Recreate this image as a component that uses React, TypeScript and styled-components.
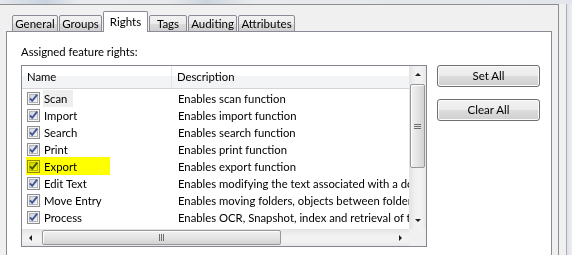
import React from "react";
import styled, { createGlobalStyle } from "styled-components";

const GlobalStyle = createGlobalStyle`
  html, body {
    margin: 0;
    padding: 0;
    background: #f0f0f0;
  }
  body {
    font-family: "Segoe UI", Lato, "Liberation Sans", sans-serif;
    font-size: 11.3px;
    color: #000;
  }
`;

const TABS = [
  { label: "General", width: 46 },
  { label: "Groups", width: 43 },
  { label: "Rights", width: 45, active: true },
  { label: "Tags", width: 38 },
  { label: "Auditing", width: 49 },
  { label: "Attributes", width: 57 },
];

const RIGHTS = [
  { name: "Scan", desc: "Enables scan function", focused: true },
  { name: "Import", desc: "Enables import function" },
  { name: "Search", desc: "Enables search function" },
  { name: "Print", desc: "Enables print function" },
  { name: "Export", desc: "Enables export function", marked: true },
  { name: "Edit Text", desc: "Enables modifying the text associated with a document" },
  { name: "Move Entry", desc: "Enables moving folders, objects between folders" },
  { name: "Process", desc: "Enables OCR, Snapshot, index and retrieval of text" },
];

const CheckBox = () => (
  <StyledCheck width="13" height="13" viewBox="0 0 13 13">
    <defs>
      <linearGradient id="cbfill" x1="0" y1="0" x2="1" y2="1">
        <stop offset="0" stopColor="#cfd1d6" />
        <stop offset="1" stopColor="#f7f7f7" />
      </linearGradient>
    </defs>
    <rect x="0.5" y="0.5" width="12" height="12" fill="#f4f4f4" stroke="#8f8f8f" />
    <rect x="2.5" y="2.5" width="8" height="8" fill="url(#cbfill)" stroke="#b3b6bd" />
    <path d="M3 6.3 L5.2 8.8 L10.2 2.6" fill="none" stroke="#40569a" strokeWidth="1.9" />
  </StyledCheck>
);

const Arrow = ({ dir }: { dir: "up" | "down" | "left" | "right" }) => {
  const d = {
    up: "M1 4 L4 1 L7 4 Z",
    down: "M1 1 L4 4 L7 1 Z",
    left: "M4 1 L1 4 L4 7 Z",
    right: "M1 1 L4 4 L1 7 Z",
  }[dir];
  const vertical = dir === "up" || dir === "down";
  return (
    <svg width={vertical ? 8 : 5} height={vertical ? 5 : 8} viewBox={vertical ? "0 0 8 5" : "0 0 5 8"}>
      <path d={d} fill="#1e1e1e" />
    </svg>
  );
};

export default function App() {
  return (
    <>
      <GlobalStyle />
      <StyledScreen>
        <StyledBackdrop />
        <StyledBody>
          <StyledDialog>
            <StyledTabRow>
              {TABS.map((t) => (
                <StyledTab key={t.label} $width={t.width} $active={!!t.active}>
                  {t.label}
                </StyledTab>
              ))}
            </StyledTabRow>
            <StyledPanel>
              <StyledCaption>Assigned feature rights:</StyledCaption>
              <StyledContent>
                <StyledListBox>
                  <StyledListMain>
                    <StyledListArea>
                      <StyledHeader>
                        <StyledHeaderCell $width={150}>Name</StyledHeaderCell>
                        <StyledHeaderCell>Description</StyledHeaderCell>
                      </StyledHeader>
                      {RIGHTS.map((r) => (
                        <StyledRow key={r.name}>
                          <StyledNameCell>
                            <CheckBox />
                            <StyledName $focused={!!r.focused}>{r.name}</StyledName>
                            {r.marked && <StyledMarker />}
                          </StyledNameCell>
                          <StyledDescCell>{r.desc}</StyledDescCell>
                        </StyledRow>
                      ))}
                    </StyledListArea>
                    <StyledVScroll>
                      <StyledScrollButton>
                        <Arrow dir="up" />
                      </StyledScrollButton>
                      <StyledVTrack>
                        <StyledVThumb>
                          <StyledGrip $vertical />
                        </StyledVThumb>
                      </StyledVTrack>
                      <StyledScrollButton>
                        <Arrow dir="down" />
                      </StyledScrollButton>
                    </StyledVScroll>
                  </StyledListMain>
                  <StyledHScrollRow>
                    <StyledHScroll>
                      <StyledScrollButton>
                        <Arrow dir="left" />
                      </StyledScrollButton>
                      <StyledHTrack>
                        <StyledHThumb>
                          <StyledGrip />
                        </StyledHThumb>
                      </StyledHTrack>
                      <StyledScrollButton>
                        <Arrow dir="right" />
                      </StyledScrollButton>
                    </StyledHScroll>
                    <StyledCorner />
                  </StyledHScrollRow>
                </StyledListBox>
                <StyledButtons>
                  <StyledButton>Set All</StyledButton>
                  <StyledButton>Clear All</StyledButton>
                </StyledButtons>
              </StyledContent>
            </StyledPanel>
          </StyledDialog>
          <StyledGap />
          <StyledWindowEdge />
        </StyledBody>
      </StyledScreen>
    </>
  );
}

const StyledScreen = styled.div`
  width: 572px;
  height: 255px;
  overflow: hidden;
  display: flex;
  flex-direction: column;
  background: #f0f0f0;
`;

const StyledBackdrop = styled.div`
  height: 4px;
  flex: none;
  background: linear-gradient(
    90deg,
    #e4e7ec 0%,
    #c9d3e0 8%,
    #e9ebee 14%,
    #e6e8eb 30%,
    #cdd5df 36%,
    #e8eaed 44%,
    #e2e5e9 100%
  );
`;

const StyledBody = styled.div`
  flex: 1;
  display: flex;
  min-height: 0;
`;

const StyledDialog = styled.div`
  width: 559px;
  flex: none;
  border-top: 1px solid #8c8e91;
  border-right: 1px solid #8c8e91;
  padding: 7px 0 0 6px;
  display: flex;
  flex-direction: column;
  box-sizing: border-box;
`;

const StyledGap = styled.div`
  width: 7px;
  flex: none;
`;

const StyledWindowEdge = styled.div`
  flex: 1;
  border-left: 1px solid #a9acb0;
  background: linear-gradient(90deg, #dfe2e6, #eceef1);
`;

const StyledTabRow = styled.div`
  display: flex;
  align-items: flex-end;
  gap: 1px;
  height: 20px;
  padding-left: 6px;
  margin-bottom: -1px;
  position: relative;
  z-index: 1;
`;

const StyledTab = styled.div<{ $width: number; $active: boolean }>`
  width: ${({ $width }) => $width}px;
  height: ${({ $active }) => ($active ? 21 : 17)}px;
  box-sizing: border-box;
  border: 1px solid #898c95;
  border-bottom: ${({ $active }) => ($active ? "none" : "1px solid #898c95")};
  border-radius: 2px 2px 0 0;
  background: ${({ $active }) =>
    $active ? "#ffffff" : "linear-gradient(#f2f2f2 0%, #ebebeb 50%, #dddddd 51%, #cfcfcf 100%)"};
  display: flex;
  align-items: ${({ $active }) => ($active ? "flex-start" : "center")};
  justify-content: center;
  padding-top: ${({ $active }) => ($active ? "2px" : "0")};
  font-size: 11.5px;
  line-height: 16px;
  white-space: nowrap;
`;

const StyledPanel = styled.div`
  flex: 1;
  width: 546px;
  box-sizing: border-box;
  background: #ffffff;
  border: 1px solid #898c95;
  border-bottom: none;
  padding: 12px 0 0 14px;
`;

const StyledCaption = styled.div`
  line-height: 16px;
  height: 16px;
  margin-bottom: 5px;
`;

const StyledContent = styled.div`
  display: flex;
  align-items: flex-start;
  gap: 10px;
`;

const StyledListBox = styled.div`
  width: 406px;
  height: 182px;
  box-sizing: border-box;
  border: 1px solid #828790;
  display: flex;
  flex-direction: column;
  overflow: hidden;
`;

const StyledListMain = styled.div`
  flex: 1;
  display: flex;
  min-height: 0;
`;

const StyledListArea = styled.div`
  flex: 1;
  overflow: hidden;
  min-width: 0;
`;

const StyledHeader = styled.div`
  display: flex;
  height: 23px;
  box-sizing: border-box;
  border-bottom: 1px solid #d5d5d5;
  background: linear-gradient(#ffffff 0%, #ffffff 45%, #f3f4f6 46%, #f3f4f6 100%);
  margin-bottom: 1px;
`;

const StyledHeaderCell = styled.div<{ $width?: number }>`
  ${({ $width }) => ($width ? `width: ${$width}px; border-right: 1px solid #e3e5e8;` : "flex: 1;")}
  flex-shrink: 0;
  padding-left: 5px;
  line-height: 22px;
  white-space: nowrap;
  box-sizing: border-box;
`;

const StyledRow = styled.div`
  display: flex;
  height: 17px;
  align-items: center;
  white-space: nowrap;
`;

const StyledNameCell = styled.div`
  width: 150px;
  flex-shrink: 0;
  display: flex;
  align-items: center;
  padding-left: 5px;
  box-sizing: border-box;
  height: 17px;
  position: relative;
`;

const StyledCheck = styled.svg`
  flex: none;
  display: block;
`;

const StyledName = styled.span<{ $focused: boolean }>`
  margin-left: 3px;
  padding: 0 ${({ $focused }) => ($focused ? 6 : 2)}px 0 1px;
  line-height: 17px;
  background: ${({ $focused }) => ($focused ? "#eeeeee" : "transparent")};
`;

const StyledMarker = styled.span`
  position: absolute;
  left: 4px;
  top: -1px;
  width: 84px;
  height: 18px;
  background: #ffff00;
  mix-blend-mode: multiply;
`;

const StyledDescCell = styled.div`
  padding-left: 6px;
  line-height: 17px;
`;

const StyledVScroll = styled.div`
  width: 17px;
  flex: none;
  display: flex;
  flex-direction: column;
  background: linear-gradient(90deg, #e3e3e3, #f2f2f2 40%, #f2f2f2 70%, #e8e8e8);
`;

const StyledScrollButton = styled.div`
  width: 17px;
  height: 17px;
  flex: none;
  display: flex;
  align-items: center;
  justify-content: center;
`;

const StyledVTrack = styled.div`
  flex: 1;
  padding: 1px 1px 0 1px;
`;

const StyledVThumb = styled.div`
  height: 84px;
  box-sizing: border-box;
  border: 1px solid #979797;
  border-radius: 2px;
  background: linear-gradient(90deg, #f1f1f1, #e4e4e4 50%, #d3d3d3);
  box-shadow: inset 1px 1px 0 #fdfdfd;
  display: flex;
  align-items: center;
  justify-content: center;
`;

const StyledGrip = styled.div<{ $vertical?: boolean }>`
  width: ${({ $vertical }) => ($vertical ? 7 : 5)}px;
  height: ${({ $vertical }) => ($vertical ? 5 : 7)}px;
  background: ${({ $vertical }) =>
    $vertical
      ? "repeating-linear-gradient(#6e6e6e 0 1px, transparent 1px 2px)"
      : "repeating-linear-gradient(90deg, #6e6e6e 0 1px, transparent 1px 2px)"};
`;

const StyledHScrollRow = styled.div`
  height: 17px;
  flex: none;
  display: flex;
`;

const StyledHScroll = styled.div`
  flex: 1;
  display: flex;
  background: linear-gradient(#e3e3e3, #f2f2f2 40%, #f2f2f2 70%, #e8e8e8);
`;

const StyledHTrack = styled.div`
  flex: 1;
  padding: 1px 0 1px 3px;
`;

const StyledHThumb = styled.div`
  width: 239px;
  height: 15px;
  box-sizing: border-box;
  border: 1px solid #979797;
  border-radius: 2px;
  background: linear-gradient(#f1f1f1, #e4e4e4 50%, #d3d3d3);
  box-shadow: inset 1px 1px 0 #fdfdfd;
  display: flex;
  align-items: center;
  justify-content: center;
`;

const StyledCorner = styled.div`
  width: 17px;
  flex: none;
  background: #f0f0f0;
`;

const StyledButtons = styled.div`
  display: flex;
  flex-direction: column;
  gap: 12px;
`;

const StyledButton = styled.button`
  width: 103px;
  height: 22px;
  box-sizing: border-box;
  border: 1px solid #707070;
  border-radius: 3px;
  background: linear-gradient(#f2f2f2 0%, #ebebeb 50%, #dddddd 51%, #cfcfcf 100%);
  box-shadow: inset 0 0 0 1px #fbfbfb;
  font: inherit;
  font-size: 11.5px;
  color: #000;
  padding: 0;
  line-height: 18px;
`;
